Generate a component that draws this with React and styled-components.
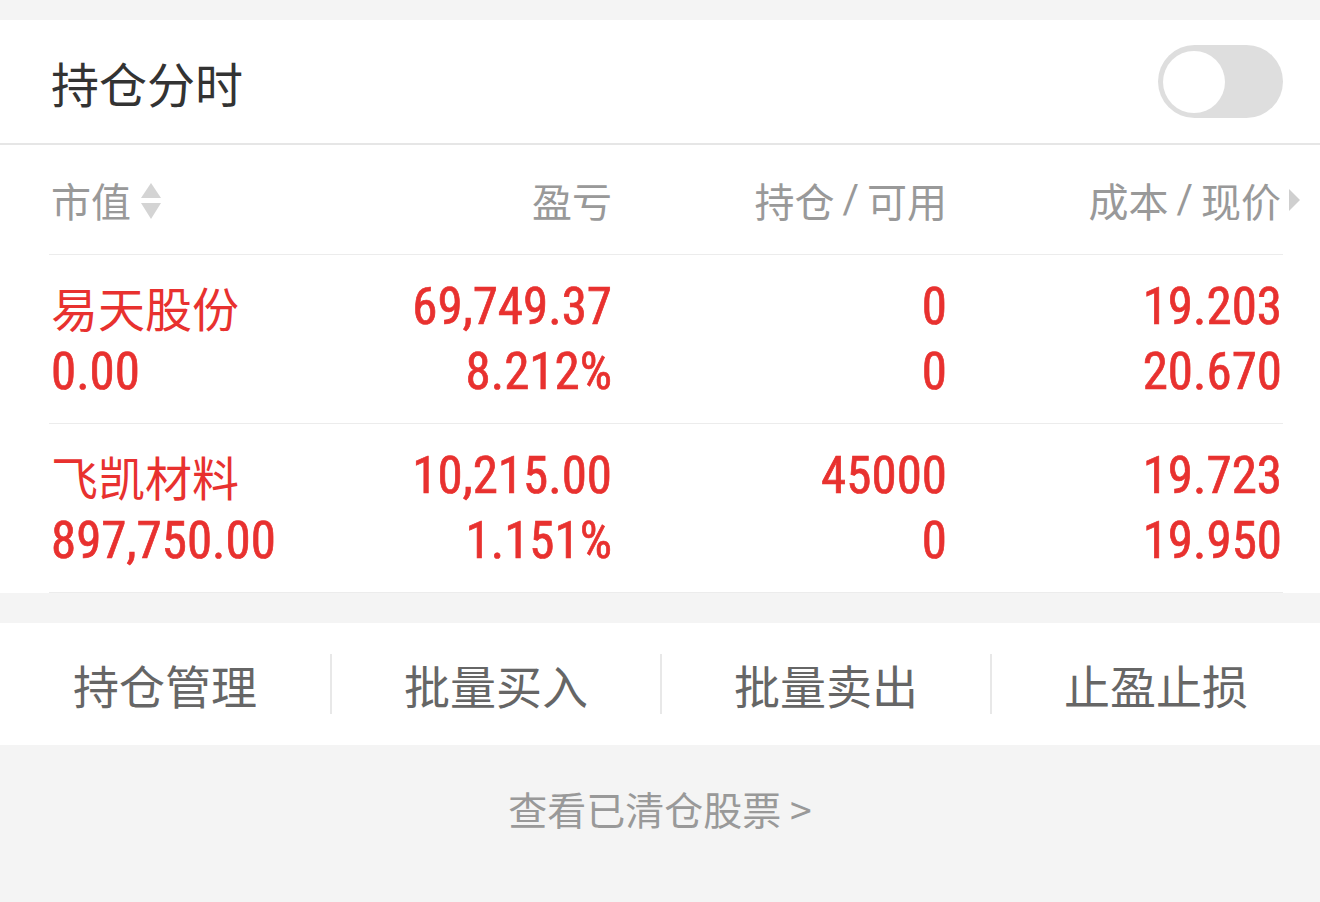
import React from 'react'
import styled, { createGlobalStyle } from 'styled-components'

const GlobalStyle = createGlobalStyle`
  html, body {
    margin: 0;
    padding: 0;
    background: #f4f4f4;
    font-family: "Noto Sans CJK SC", "Noto Sans", sans-serif;
  }
`

const RED = '#e8312f'
const NUM_FONT = `"Liberation Sans Narrow", "Roboto Condensed", Roboto, "Noto Sans CJK SC", sans-serif`

const Page = styled.div`
  width: 1320px;
  height: 902px;
  padding-top: 20px;
  box-sizing: border-box;
  display: flex;
  flex-direction: column;
`

const Header = styled.div`
  height: 123px;
  background: #fff;
  display: flex;
  align-items: center;
  justify-content: space-between;
  padding: 0 37px 0 51px;
  border-bottom: 2px solid #e6e6e6;
`

const Title = styled.div`
  font-size: 48px;
  color: #333;
`

const Toggle = styled.div`
  width: 125px;
  height: 73px;
  border-radius: 37px;
  background: #dedede;
  display: flex;
  align-items: center;
  padding-left: 5px;
  box-sizing: border-box;
`

const Knob = styled.div`
  width: 62px;
  height: 62px;
  border-radius: 50%;
  background: #fff;
`

const Table = styled.div`
  background: #fff;
  padding: 0 37px 0 49px;
`

const Grid = styled.div`
  display: grid;
  grid-template-columns: 226px 337px 335px 1fr;
  align-items: center;
  border-bottom: 1px solid #ececec;
  height: ${(p) => p.h}px;
  box-sizing: border-box;
`

const HeadCell = styled.div`
  font-size: 40px;
  color: #999;
  display: flex;
  align-items: center;
  justify-content: ${(p) => (p.left ? 'flex-start' : 'flex-end')};
  padding-left: ${(p) => (p.left ? '2px' : '0')};
  padding-right: ${(p) => (p.last ? '2px' : '0')};
  position: relative;
  white-space: nowrap;
`

const Slash = styled.span`
  font-family: Roboto, sans-serif;
  margin: 0 8px;
`

const SortIcon = styled.svg`
  margin-left: 9px;
  margin-top: 2px;
`

const MoreIcon = styled.svg`
  position: absolute;
  right: -17px;
  top: 50%;
  transform: translateY(-50%);
`

const Cell = styled.div`
  display: flex;
  flex-direction: column;
  align-items: ${(p) => (p.left ? 'flex-start' : 'flex-end')};
  padding-left: ${(p) => (p.left ? '2px' : '0')};
  padding-right: ${(p) => (p.last ? '1px' : '0')};
  gap: 8px;
  color: ${RED};
  white-space: nowrap;
`

const Num = styled.div`
  font-family: ${NUM_FONT};
  font-size: 51px;
  line-height: 57px;
  -webkit-text-stroke: 0.7px ${RED};
`

const Name = styled.div`
  font-size: 47px;
  line-height: 57px;
`

const Gap = styled.div`
  height: 30px;
`

const Actions = styled.div`
  height: 122px;
  background: #fff;
  display: grid;
  grid-template-columns: repeat(4, 1fr);
  align-items: center;
`

const Action = styled.div`
  font-size: 46px;
  color: #666;
  text-align: center;
  height: 60px;
  line-height: 60px;
  border-left: ${(p) => (p.first ? 'none' : '2px solid #e8e8e8')};
`

const Footer = styled.div`
  flex: 1;
  display: flex;
  justify-content: center;
  padding-top: 38px;
`

const Link = styled.div`
  font-size: 39px;
  color: #999;
  height: 50px;
  line-height: 50px;
`

const rows = [
  { name: '易天股份', value: '0.00', pl: '69,749.37', plr: '8.212%', hold: '0', avail: '0', cost: '19.203', price: '20.670' },
  { name: '飞凯材料', value: '897,750.00', pl: '10,215.00', plr: '1.151%', hold: '45000', avail: '0', cost: '19.723', price: '19.950' }
]

export default function App() {
  return (
    <Page>
      <GlobalStyle />
      <Header>
        <Title>持仓分时</Title>
        <Toggle>
          <Knob />
        </Toggle>
      </Header>
      <Table>
        <Grid h={110}>
          <HeadCell left>
            市值
            <SortIcon width="22" height="38" viewBox="0 0 22 38">
              <path d="M11 1 L21 16 L1 16 Z" fill="#d4d4d4" />
              <path d="M1 21 L21 21 L11 37 Z" fill="#d4d4d4" />
            </SortIcon>
          </HeadCell>
          <HeadCell>盈亏</HeadCell>
          <HeadCell>
            持仓<Slash>/</Slash>可用
          </HeadCell>
          <HeadCell last>
            成本<Slash>/</Slash>现价
            <MoreIcon width="11" height="22" viewBox="0 0 11 22">
              <path d="M0 0 L11 11 L0 22 Z" fill="#cfcfcf" />
            </MoreIcon>
          </HeadCell>
        </Grid>
        {rows.map((r) => (
          <Grid h={169} key={r.name}>
            <Cell left>
              <Name>{r.name}</Name>
              <Num>{r.value}</Num>
            </Cell>
            <Cell>
              <Num>{r.pl}</Num>
              <Num>{r.plr}</Num>
            </Cell>
            <Cell>
              <Num>{r.hold}</Num>
              <Num>{r.avail}</Num>
            </Cell>
            <Cell last>
              <Num>{r.cost}</Num>
              <Num>{r.price}</Num>
            </Cell>
          </Grid>
        ))}
      </Table>
      <Gap />
      <Actions>
        <Action first>持仓管理</Action>
        <Action>批量买入</Action>
        <Action>批量卖出</Action>
        <Action>止盈止损</Action>
      </Actions>
      <Footer>
        <Link>查看已清仓股票 &gt;</Link>
      </Footer>
    </Page>
  )
}
